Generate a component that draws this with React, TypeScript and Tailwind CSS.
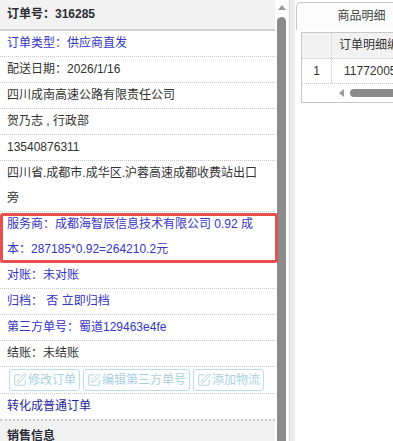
import { SquarePen } from "lucide-react"

const rowCls = "px-[7px] pr-[14px] leading-[25px] border-b border-dotted border-[#c9c9c9]"

function Row({ children, className = "" }: { children: React.ReactNode, className?: string }) {
    return <div className={`${rowCls} ${className}`}>{children}</div>
}

function Btn({ label }: { label: string }) {
    return (
        <button className="flex items-center gap-[1px] h-[22px] px-[3px] border border-[#bcdde8] rounded-[3px] text-[#a9d0e0] leading-none">
            <SquarePen size={14} strokeWidth={1.6} />
            <span>{label}</span>
        </button>
    )
}

export default function App() {
    return (
        <div className="flex h-[441px] w-[393px] overflow-hidden bg-white text-[12px] text-[#333] font-['Liberation_Sans','Noto_Sans_CJK_SC',sans-serif]">
            {/* order info */}
            <div className="w-[275px] shrink-0 relative z-10">
                <div className="h-[31px] px-[7px] leading-[29px] bg-[#f2f2f2] border-b-2 border-[#d2d2d2] font-bold text-[#2b2b36]">
                    订单号：316285
                </div>
                <Row className="text-[#3535c6]">订单类型：供应商直发</Row>
                <Row>配送日期：2026/1/16</Row>
                <Row>四川成南高速公路有限责任公司</Row>
                <Row>贺乃志 , 行政部</Row>
                <Row>13540876311</Row>
                <Row>四川省.成都市.成华区.沪蓉高速成都收费站出口旁</Row>
                <Row className="relative text-[#3535c6]">
                    服务商：成都海智辰信息技术有限公司 0.92 成本：287185*0.92=264210.2元
                    <div className="absolute top-[1px] -bottom-[1px] left-0 -right-[3px] border-[3px] border-[#e8504f] rounded-[3px]" />
                </Row>
                <Row className="text-[#3535c6]">对账：未对账</Row>
                <Row className="text-[#3535c6]">归档：&nbsp;否 立即归档</Row>
                <Row className="text-[#3535c6]">第三方单号：蜀道129463e4fe</Row>
                <Row>结账：未结账</Row>
                <div className="flex gap-[3px] pl-[9px] pt-[2px] pb-[2px] border-b border-dotted border-[#c9c9c9]">
                    <Btn label="修改订单" />
                    <Btn label="编辑第三方单号" />
                    <Btn label="添加物流" />
                </div>
                <div className="px-[7px] leading-[25px] text-[#1f1fa3]">转化成普通订单</div>
                <div className="h-[40px] px-[7px] leading-[30px] bg-[#f2f2f2] border-t-2 border-dotted border-[#c9c9c9] font-bold text-[#2b2b36]">
                    销售信息
                </div>
            </div>

            {/* scrollbar */}
            <div className="w-[14px] shrink-0 pt-[5px]">
                <div className="ml-[3px] w-0 h-0 border-l-[4px] border-r-[4px] border-b-[5px] border-l-transparent border-r-transparent border-b-[#9a9a9a]" />
                <div className="ml-[2px] mt-[7px] w-[9px] h-[430px] rounded-t-full bg-[#8b8b8b]" />
            </div>
            <div className="w-[6px] shrink-0 border-l border-[#d6d6d6] bg-[#ededed]" />

            {/* goods detail */}
            <div className="flex-1 min-w-0 overflow-hidden">
                <div className="ml-[1px] mt-[2px] w-[130px] h-[28px] rounded-tl-[5px] border-l border-t border-[#c8c8c8] bg-[#fcfcfc] text-center leading-[26px] text-[#444]">
                    商品明细
                </div>
                <div className="ml-[6px] mt-[2px] w-[200px] border-l border-t border-b border-[#c8c8c8]">
                    <div className="flex h-[26px] bg-[#f2f2f2] border-b border-dotted border-[#c9c9c9] leading-[25px]">
                        <div className="w-[30px] shrink-0 border-r border-dotted border-[#c9c9c9]" />
                        <div className="pl-[7px] whitespace-nowrap">订单明细编号</div>
                    </div>
                    <div className="flex h-[25px] border-b border-dotted border-[#c9c9c9] leading-[24px]">
                        <div className="w-[30px] shrink-0 border-r border-dotted border-[#c9c9c9] text-center">1</div>
                        <div className="pl-[12px] whitespace-nowrap">117720053</div>
                    </div>
                    <div className="flex items-center h-[18px]">
                        <div className="ml-[37px] w-0 h-0 border-t-[4px] border-b-[4px] border-r-[5px] border-t-transparent border-b-transparent border-r-[#9a9a9a]" />
                        <div className="ml-[6px] w-[100px] h-[8px] rounded-l-full bg-[#8b8b8b]" />
                    </div>
                </div>
            </div>
        </div>
    )
}
